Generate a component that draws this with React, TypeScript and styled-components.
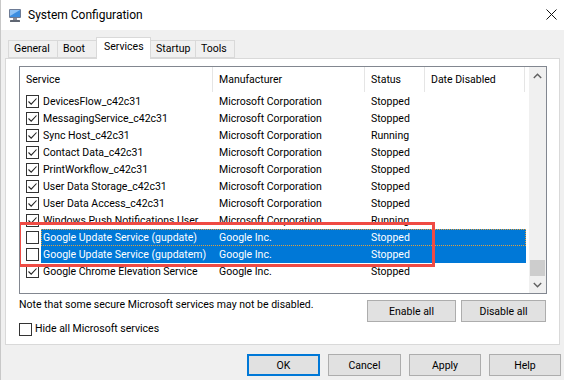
import styled, { createGlobalStyle } from 'styled-components';

type Service = {
  name: string;
  maker: string;
  status: string;
  checked: boolean;
  selected?: boolean;
  focus?: boolean;
};

const services: Service[] = [
  { name: 'DevicesFlow_c42c31', maker: 'Microsoft Corporation', status: 'Stopped', checked: true },
  { name: 'MessagingService_c42c31', maker: 'Microsoft Corporation', status: 'Stopped', checked: true },
  { name: 'Sync Host_c42c31', maker: 'Microsoft Corporation', status: 'Running', checked: true },
  { name: 'Contact Data_c42c31', maker: 'Microsoft Corporation', status: 'Stopped', checked: true },
  { name: 'PrintWorkflow_c42c31', maker: 'Microsoft Corporation', status: 'Stopped', checked: true },
  { name: 'User Data Storage_c42c31', maker: 'Microsoft Corporation', status: 'Stopped', checked: true },
  { name: 'User Data Access_c42c31', maker: 'Microsoft Corporation', status: 'Stopped', checked: true },
  { name: 'Windows Push Notifications User Service', maker: 'Microsoft Corporation', status: 'Running', checked: true },
  { name: 'Google Update Service (gupdate)', maker: 'Google Inc.', status: 'Stopped', checked: false, selected: true, focus: true },
  { name: 'Google Update Service (gupdatem)', maker: 'Google Inc.', status: 'Stopped', checked: false, selected: true },
  { name: 'Google Chrome Elevation Service', maker: 'Google Inc.', status: 'Stopped', checked: true },
];

const tabs = [
  { label: 'General', w: 50 },
  { label: 'Boot', w: 40 },
  { label: 'Services', w: 55, active: true },
  { label: 'Startup', w: 46 },
  { label: 'Tools', w: 40 },
];

const GlobalStyle = createGlobalStyle`
  html, body {
    margin: 0;
    padding: 0;
    background: #f0f0f0;
  }
  body {
    font-family: Roboto, "Noto Sans", sans-serif;
    font-size: 10.5px;
    color: #000;
  }
`;

function Check({ checked }: { checked: boolean }) {
  return (
    <CheckBox>
      {checked && (
        <svg width="11" height="11" viewBox="0 0 11 11">
          <path d="M1.5 5.5 L4.2 8.2 L9.5 2.5" fill="none" stroke="#222" strokeWidth="1.1" />
        </svg>
      )}
    </CheckBox>
  );
}

function AppIcon() {
  return (
    <svg width="14" height="15" viewBox="0 0 14 15">
      <rect x="1" y="1" width="12" height="9" rx="1" fill="#6d7b95" />
      <rect x="2" y="2" width="10" height="7" fill="#3b8ee0" />
      <path d="M2 2 L12 2 L2 8 Z" fill="#8fc3f5" />
      <rect x="5" y="10" width="4" height="2" fill="#8a8f99" />
      <rect x="2" y="12" width="10" height="2" rx="0.5" fill="#5f6672" />
    </svg>
  );
}

export default function App() {
  return (
    <>
      <GlobalStyle />
      <Window>
        <TitleBar>
          <TitleLeft>
            <AppIcon />
            <TitleText>System Configuration</TitleText>
          </TitleLeft>
          <CloseButton>
            <svg width="11" height="11" viewBox="0 0 11 11">
              <path d="M0.5 0.5 L10.5 10.5 M10.5 0.5 L0.5 10.5" stroke="#111" strokeWidth="1" />
            </svg>
          </CloseButton>
        </TitleBar>
        <Body>
          <TabStrip>
            {tabs.map((t) => (
              <Tab key={t.label} $w={t.w} $active={!!t.active}>
                {t.label}
              </Tab>
            ))}
          </TabStrip>
          <Panel>
            <ListBox>
              <ListMain>
                <HeaderRow>
                  <HeadCell $w={193}>Service</HeadCell>
                  <HeadCell $w={152}>Manufacturer</HeadCell>
                  <HeadCell $w={60}>Status</HeadCell>
                  <HeadCell $w={100}>Date Disabled</HeadCell>
                </HeaderRow>
                {services.map((s) => (
                  <Row key={s.name}>
                    <CheckCell>
                      <Check checked={s.checked} />
                    </CheckCell>
                    <RowBody $selected={!!s.selected} $focus={!!s.focus}>
                      <NameCell>{s.name}</NameCell>
                      <Cell $w={152}>{s.maker}</Cell>
                      <Cell $w={60}>{s.status}</Cell>
                      <Cell $w={100}></Cell>
                    </RowBody>
                  </Row>
                ))}
                <Callout />
              </ListMain>
              <ScrollBar>
                <ScrollArrow>
                  <svg width="9" height="6" viewBox="0 0 9 6">
                    <path d="M0.8 5 L4.5 1.3 L8.2 5" fill="none" stroke="#606060" strokeWidth="1.4" />
                  </svg>
                </ScrollArrow>
                <ScrollTrack>
                  <Thumb />
                </ScrollTrack>
                <ScrollArrow>
                  <svg width="9" height="6" viewBox="0 0 9 6">
                    <path d="M0.8 1 L4.5 4.7 L8.2 1" fill="none" stroke="#606060" strokeWidth="1.4" />
                  </svg>
                </ScrollArrow>
              </ScrollBar>
            </ListBox>
            <PanelFooter>
              <FooterLeft>
                <Note>Note that some secure Microsoft services may not be disabled.</Note>
                <HideRow>
                  <Check checked={false} />
                  <span>Hide all Microsoft services</span>
                </HideRow>
              </FooterLeft>
              <FooterButtons>
                <Button $w={89}>Enable all</Button>
                <Button $w={85}>Disable all</Button>
              </FooterButtons>
            </PanelFooter>
          </Panel>
          <DialogButtons>
            <Button $w={73} $default>
              OK
            </Button>
            <Button $w={73}>Cancel</Button>
            <Button $w={72}>Apply</Button>
            <Button $w={72}>Help</Button>
          </DialogButtons>
        </Body>
      </Window>
    </>
  );
}

const Window = styled.div`
  width: 564px;
  height: 380px;
  overflow: hidden;
  display: flex;
  flex-direction: column;
  background: #f0f0f0;
  border-left: 1px solid #c8c8c8;
  box-sizing: border-box;
`;

const TitleBar = styled.div`
  height: 30px;
  flex: none;
  background: #fff;
  display: flex;
  align-items: center;
  justify-content: space-between;
  padding: 0 5px 0 7px;
  box-sizing: border-box;
`;

const TitleLeft = styled.div`
  display: flex;
  align-items: center;
  gap: 6px;
`;

const TitleText = styled.span`
  font-size: 12px;
  color: #000;
  margin-top: -1px;
`;

const CloseButton = styled.div`
  width: 16px;
  height: 16px;
  display: flex;
  align-items: center;
  justify-content: center;
  margin-top: -1px;
`;

const Body = styled.div`
  flex: 1;
  display: flex;
  flex-direction: column;
  padding: 7px 3px 0 4px;
`;

const TabStrip = styled.div`
  display: flex;
  align-items: flex-end;
  padding-left: 4px;
  height: 21px;
  position: relative;
  z-index: 1;
`;

const Tab = styled.div<{ $w: number; $active: boolean }>`
  width: ${(p) => p.$w}px;
  height: ${(p) => (p.$active ? 22 : 18)}px;
  box-sizing: border-box;
  border: 1px solid #d9d9d9;
  border-bottom: ${(p) => (p.$active ? 'none' : '1px solid #d9d9d9')};
  margin-left: -1px;
  margin-bottom: ${(p) => (p.$active ? -1 : 0)}px;
  background: ${(p) => (p.$active ? '#fff' : '#f0f0f0')};
  padding-left: ${(p) => (p.$active ? 7 : 5)}px;
  padding-top: ${(p) => (p.$active ? 1 : 0)}px;
  line-height: 16px;
  color: #000;
  white-space: nowrap;
`;

const Panel = styled.div`
  width: 555px;
  height: 287px;
  box-sizing: border-box;
  background: #fff;
  border: 1px solid #d9d9d9;
  padding: 7px 12px 0 13px;
  display: flex;
  flex-direction: column;
`;

const ListBox = styled.div`
  height: 228px;
  box-sizing: border-box;
  border: 1px solid #828790;
  display: flex;
  overflow: hidden;
`;

const ListMain = styled.div`
  flex: 1;
  position: relative;
  overflow: hidden;
`;

const HeaderRow = styled.div`
  display: flex;
  height: 25px;
  margin-bottom: 1px;
`;

const HeadCell = styled.div<{ $w: number }>`
  width: ${(p) => p.$w}px;
  flex: none;
  box-sizing: border-box;
  padding-left: 6px;
  line-height: 25px;
  border-right: 1px solid #e5e5e5;
  color: #000;
  white-space: nowrap;
`;

const Row = styled.div`
  display: flex;
  height: 17px;
`;

const CheckCell = styled.div`
  width: 21px;
  flex: none;
  box-sizing: border-box;
  padding: 2px 0 0 6px;
`;

const CheckBox = styled.div`
  width: 13px;
  height: 13px;
  flex: none;
  box-sizing: border-box;
  border: 1px solid #333;
  background: #fff;
  display: flex;
  align-items: center;
  justify-content: center;
`;

const RowBody = styled.div<{ $selected: boolean; $focus: boolean }>`
  display: flex;
  width: 485px;
  height: 17px;
  box-sizing: border-box;
  background: ${(p) => (p.$selected ? '#0078d7' : 'transparent')};
  color: ${(p) => (p.$selected ? '#fff' : '#000')};
  outline: ${(p) => (p.$focus ? '1px dotted #e0a040' : 'none')};
  outline-offset: -1px;
`;

const NameCell = styled.div`
  width: 172px;
  flex: none;
  padding: 0 4px 0 2px;
  box-sizing: border-box;
  line-height: 17px;
  white-space: nowrap;
  overflow: hidden;
  text-overflow: ellipsis;
`;

const Cell = styled.div<{ $w: number }>`
  width: ${(p) => p.$w}px;
  flex: none;
  padding-left: 6px;
  box-sizing: border-box;
  line-height: 17px;
  white-space: nowrap;
  overflow: hidden;
`;

const Callout = styled.div`
  position: absolute;
  left: -2px;
  top: 155px;
  width: 417px;
  height: 45px;
  box-sizing: border-box;
  border: 3px solid #ef4b44;
  pointer-events: none;
`;

const ScrollBar = styled.div`
  width: 17px;
  flex: none;
  background: #f0f0f0;
  display: flex;
  flex-direction: column;
`;

const ScrollArrow = styled.div`
  height: 17px;
  flex: none;
  display: flex;
  align-items: center;
  justify-content: center;
`;

const ScrollTrack = styled.div`
  flex: 1;
  position: relative;
`;

const Thumb = styled.div`
  position: absolute;
  left: 1px;
  right: 1px;
  bottom: 0;
  height: 16px;
  background: #cdcdcd;
`;

const PanelFooter = styled.div`
  display: flex;
  justify-content: space-between;
  padding-right: 1px;
`;

const FooterLeft = styled.div`
  display: flex;
  flex-direction: column;
`;

const Note = styled.div`
  margin-top: 3px;
  line-height: 16px;
  color: #000;
`;

const HideRow = styled.div`
  display: flex;
  align-items: center;
  gap: 3px;
  margin-top: 8px;
  line-height: 16px;
`;

const FooterButtons = styled.div`
  display: flex;
  gap: 5px;
  margin-top: 6px;
`;

const Button = styled.div<{ $w: number; $default?: boolean }>`
  width: ${(p) => p.$w}px;
  height: 22px;
  box-sizing: border-box;
  border: ${(p) => (p.$default ? '2px solid #0078d7' : '1px solid #adadad')};
  background: #e1e1e1;
  display: flex;
  align-items: center;
  justify-content: center;
  color: #000;
`;

const DialogButtons = styled.div`
  display: flex;
  justify-content: flex-end;
  gap: 8px;
  margin-top: 9px;
`;
